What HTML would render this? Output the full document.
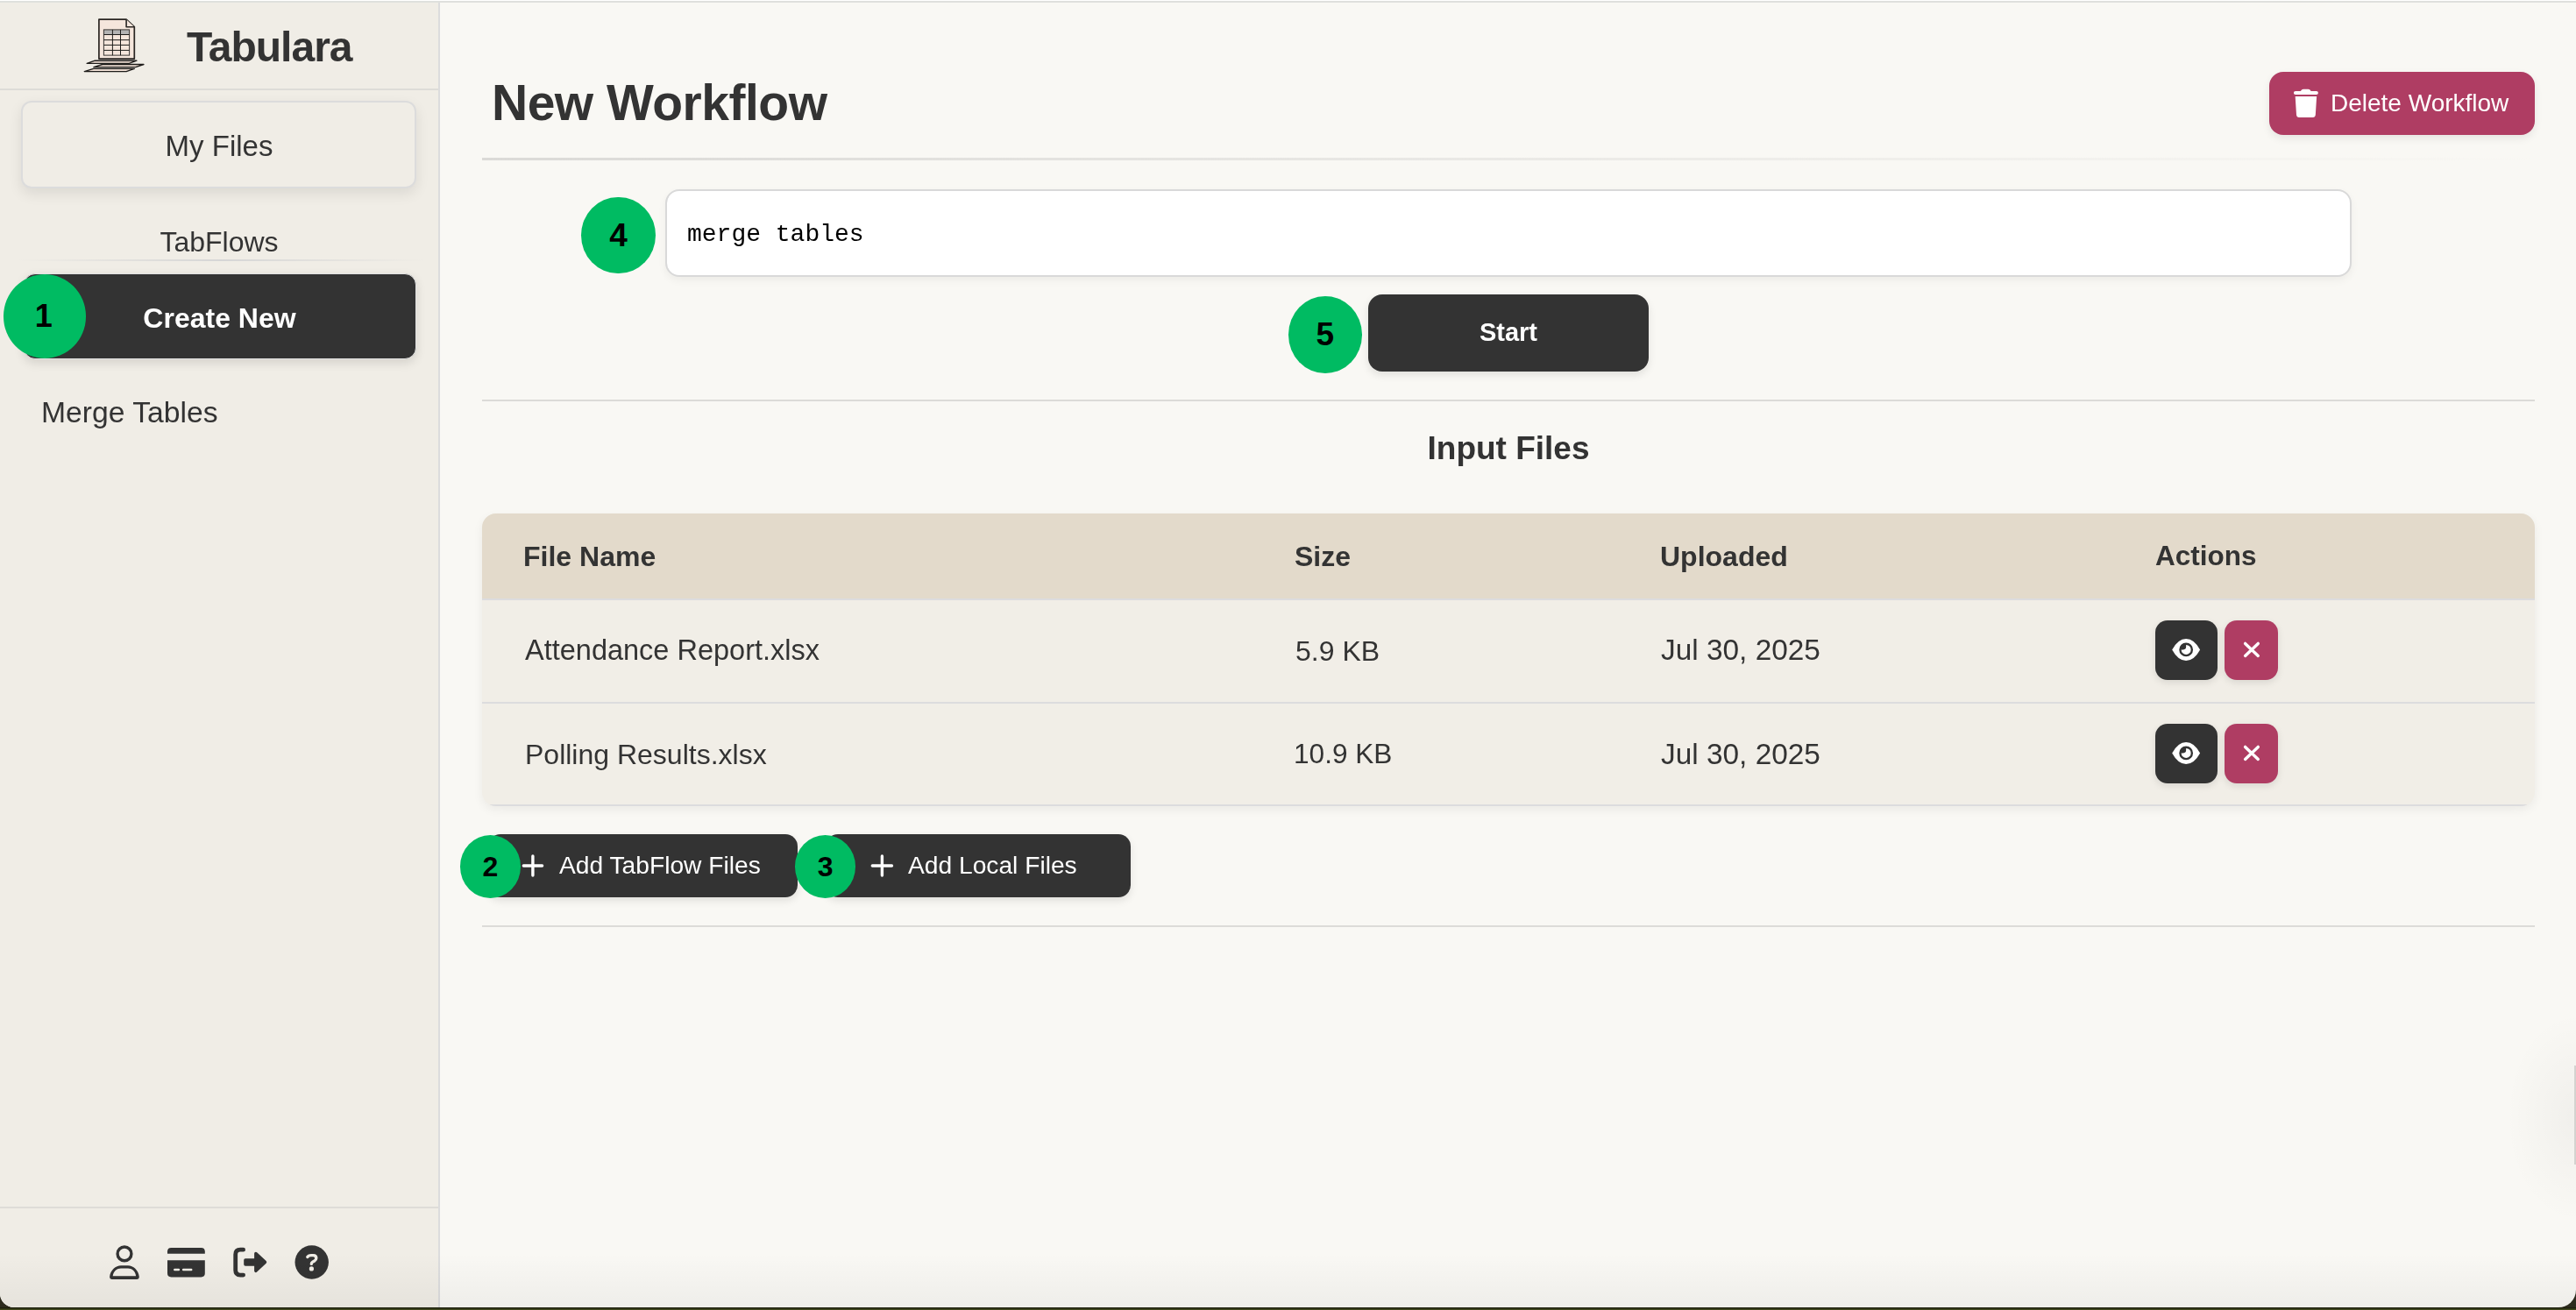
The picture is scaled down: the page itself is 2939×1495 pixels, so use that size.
<!DOCTYPE html>
<html>
<head>
<meta charset="utf-8">
<style>
*{box-sizing:border-box;margin:0;padding:0}
html,body{width:2939px;height:1495px;overflow:hidden;background:#2d2b1e}
body{position:relative;font-family:"Liberation Sans",sans-serif;color:#333}
.a{position:absolute}
.win{left:0;top:0;width:2939px;height:1492px;background:#f9f8f4;border-radius:0 0 20px 16px;overflow:hidden}
.t{position:absolute;white-space:nowrap;line-height:1;will-change:transform}
.side{left:0;top:3px;width:502px;height:1489px;background:#f0ede6;border-right:2px solid #dcdcdd}
.badge{position:absolute;border-radius:50%;background:#00bb62;color:#000;font-weight:bold;display:flex;align-items:center;justify-content:center;line-height:1}
.dark{background:#333}
.crim{background:#af3d63}
</style>
</head>
<body>
<div class="a win">
  <!-- top strip -->
  <div class="a" style="left:0;top:0;width:2939px;height:1px;background:#fff"></div>
  <div class="a" style="left:0;top:1px;width:2939px;height:2px;background:#dfe0dd"></div>

  <!-- SIDEBAR -->
  <div class="a side"></div>
  <div class="a" style="left:0;top:101px;width:500px;height:2px;background:#dddcd8"></div>
  <svg class="a" style="left:90px;top:15px" width="80" height="75" viewBox="90 15 80 75">
    <path d="M112.9 22.2 L144.1 22.2 L153.3 30.7 L153.3 67.1 L112.9 67.1 Z" fill="#f5e6dc" stroke="#2a2623" stroke-width="1.7" stroke-linejoin="round"/>
    <path d="M144.1 22.2 L144.1 30.7 L153.3 30.7" fill="#f5e6dc" stroke="#2a2623" stroke-width="1.6" stroke-linejoin="round"/>
    <rect x="118.4" y="33.9" width="29.2" height="5.5" fill="#b3b3b3"/>
    <rect x="118.4" y="33.9" width="29.2" height="29.2" fill="none" stroke="#3a3633" stroke-width="1"/>
    <path d="M118.4 39.5 H147.6 M118.4 45.6 H147.6 M118.4 51.4 H147.6 M118.4 57.4 H147.6 M128.4 33.9 V63.1 M137.5 33.9 V63.1" stroke="#1e1c1a" stroke-width="1"/>
    <path d="M108.3 69.2 L155.9 69.2 L147.3 72.4 L99.2 72.4 Z" fill="#ecdcd2" stroke="#1e1c1a" stroke-width="1.4" stroke-linejoin="round"/>
    <path d="M116.9 73.5 L163.9 73.5 L154.7 76.6 L106.9 76.6 Z" fill="#ecdcd2" stroke="#1e1c1a" stroke-width="1.4" stroke-linejoin="round"/>
    <path d="M106.6 78.4 L153.3 78.4 L144.1 81.6 L96.3 81.6 Z" fill="#ecdcd2" stroke="#1e1c1a" stroke-width="1.4" stroke-linejoin="round"/>
  </svg>
  <div class="t" style="left:213px;top:29.6px;font-size:48px;font-weight:bold;letter-spacing:-1px">Tabulara</div>

  <div class="a" style="left:24px;top:115px;width:451px;height:100px;border:2px solid #dcdcdc;border-radius:12px;background:#f0ede6;box-shadow:0 6px 16px rgba(0,0,0,0.09)"></div>
  <div class="t" style="left:25px;width:450px;text-align:center;top:149.6px;font-size:33px">My Files</div>

  <div class="t" style="left:0;width:500px;text-align:center;top:260.1px;font-size:32px">TabFlows</div>
  <div class="a" style="left:20px;top:296px;width:465px;height:2px;background:linear-gradient(to right,rgba(215,215,215,0),#d6d6d6 50%,rgba(215,215,215,0))"></div>

  <div class="a dark" style="left:26.5px;top:311.5px;width:448.5px;height:98.5px;border:1.5px solid #e2e2e2;border-radius:13px;box-shadow:0 4px 12px rgba(0,0,0,0.12)"></div>
  <div class="t" style="left:27px;width:447px;text-align:center;top:346.5px;font-size:32px;font-weight:bold;color:#fff">Create New</div>
  <div class="badge" style="left:3.8px;top:313px;width:94px;height:95.7px;font-size:36px;padding-right:2px">1</div>

  <div class="t" style="left:47px;top:454.3px;font-size:33.7px">Merge Tables</div>

  <div class="a" style="left:0;top:1377px;width:500px;height:2px;background:#dedcd8"></div>
  <svg class="a" style="left:100px;top:1400px" width="300" height="80" viewBox="100 1400 300 80">
    <!-- user -->
    <circle cx="142" cy="1430.9" r="7.9" fill="none" stroke="#333" stroke-width="3.4"/>
    <path fill="#333" fill-rule="evenodd" d="M125.1 1457 C126 1449.5 132 1444.3 138 1444.3 L146 1444.3 C152 1444.3 158 1449.5 158.8 1457 Q158.8 1460 156 1460 L128 1460 Q125.1 1460 125.1 1457 Z M128.7 1456.2 C129.5 1451 133.5 1447.6 138 1447.6 L146 1447.6 C150.5 1447.6 154.5 1451 155.1 1456.2 Z"/>
    <!-- card -->
    <path fill="#333" d="M191 1430.7 L191 1428.2 Q191 1423.9 195.3 1423.9 L229.5 1423.9 Q233.8 1423.9 233.8 1428.2 L233.8 1430.7 Z"/>
    <path fill="#333" d="M191 1438.2 L233.8 1438.2 L233.8 1453.1 Q233.8 1457.4 229.5 1457.4 L195.3 1457.4 Q191 1457.4 191 1453.1 Z"/>
    <path stroke="#f0ede6" stroke-width="2.5" stroke-linecap="round" d="M199.3 1449.1 H203.9 M209.1 1449.1 H218.2"/>
    <!-- sign out -->
    <path fill="none" stroke="#333" stroke-width="4.8" stroke-linecap="round" stroke-linejoin="round" d="M277.6 1426.2 L274.2 1426.2 Q268.7 1426.2 268.7 1431.7 L268.7 1449.6 Q268.7 1455.1 274.2 1455.1 L277.6 1455.1"/>
    <path fill="#333" stroke="#333" stroke-width="3.6" stroke-linejoin="round" d="M280 1438 L291.9 1438 L291.9 1430.5 L302.4 1440.4 L291.9 1450.3 L291.9 1443 L280 1443 Z"/>
    <!-- help -->
    <circle cx="355.7" cy="1440.5" r="19.2" fill="#333"/>
    <path fill="none" stroke="#f0ede6" stroke-width="3.4" stroke-linecap="round" stroke-linejoin="round" d="M350.8 1434.6 Q351.8 1432.6 355 1432.6 L357.4 1432.6 Q360.8 1432.6 360.8 1435.8 Q360.8 1437.8 358.8 1438.9 L357 1439.9 Q355.3 1440.9 355.3 1442.4"/>
    <circle cx="355.4" cy="1447.9" r="2.6" fill="#f0ede6"/>
  </svg>

  <!-- MAIN -->
  <div class="t" style="left:561px;top:88.7px;font-size:57px;font-weight:bold;letter-spacing:-0.5px">New Workflow</div>
  <div class="a" style="left:550px;top:180px;width:2342px;height:3px;background:linear-gradient(to right,#dbdad7,rgba(219,218,215,0))"></div>

  <div class="a crim" style="left:2589px;top:82px;width:303px;height:72px;border-radius:16px;box-shadow:0 4px 10px rgba(0,0,0,0.08)"></div>
  <svg class="a" style="left:2610px;top:96px" width="40" height="44" viewBox="2610 96 40 44">
    <path fill="#fff" d="M2624.8 103.9 L2626.3 102.3 Q2627 101.8 2628 101.8 L2633.5 101.8 Q2634.5 101.8 2635.2 102.3 L2636.7 103.9 L2642.8 103.9 Q2644.9 103.9 2644.9 106 Q2644.9 108.1 2642.8 108.1 L2619 108.1 Q2616.9 108.1 2616.9 106 Q2616.9 103.9 2619 103.9 Z"/>
    <path fill="#fff" d="M2618.7 109.9 L2643.1 109.9 L2641.8 131 Q2641.5 133.9 2638.6 133.9 L2623.2 133.9 Q2620.3 133.9 2620 131 Z"/>
  </svg>
  <div class="t" style="left:2659.4px;top:103.7px;font-size:28px;color:#fff">Delete Workflow</div>

  <div class="badge" style="left:663.4px;top:224.6px;width:84.2px;height:87.4px;font-size:37px">4</div>
  <div class="a" style="left:759px;top:216px;width:1924px;height:100px;border:2px solid #d9d9d9;border-radius:16px;background:#fff;box-shadow:0 4px 10px rgba(0,0,0,0.05)"></div>
  <div class="t" style="left:783.7px;top:253.9px;font-size:28px;font-family:'Liberation Mono',monospace;color:#000">merge tables</div>

  <div class="badge" style="left:1469.6px;top:337.9px;width:84.3px;height:87.8px;font-size:37px">5</div>
  <div class="a dark" style="left:1561px;top:336px;width:320px;height:88px;border-radius:16px;box-shadow:0 4px 10px rgba(0,0,0,0.1)"></div>
  <div class="t" style="left:1561px;width:320px;text-align:center;top:364.8px;font-size:29px;font-weight:bold;color:#fff">Start</div>

  <div class="a" style="left:550px;top:456px;width:2342px;height:2px;background:#dcdbd8"></div>
  <div class="t" style="left:550px;width:2342px;text-align:center;top:492.7px;font-size:37px;font-weight:bold">Input Files</div>

  <!-- table -->
  <div class="a" style="left:550px;top:586px;width:2342px;height:334px;border-radius:16px;overflow:hidden;box-shadow:0 4px 12px rgba(0,0,0,0.06);background:#f1eee7">
    <div class="a" style="left:0;top:0;width:2342px;height:97px;background:#e3dacb"></div>
    <div class="a" style="left:0;top:97px;width:2342px;height:2px;background:#dcdcde"></div>
    <div class="a" style="left:0;top:215px;width:2342px;height:2px;background:#dcdcde"></div>
    <div class="a" style="left:0;top:332px;width:2342px;height:2px;background:#dcdcde"></div>
  </div>
  <div class="t" style="left:597px;top:618.9px;font-size:32px;font-weight:bold">File Name</div>
  <div class="t" style="left:1477.4px;top:618.9px;font-size:32px;font-weight:bold">Size</div>
  <div class="t" style="left:1893.7px;top:618.9px;font-size:32px;font-weight:bold">Uploaded</div>
  <div class="t" style="left:2458.5px;top:619.3px;font-size:31.5px;font-weight:bold">Actions</div>

  <div class="t" style="left:599px;top:726.2px;font-size:32.5px">Attendance Report.xlsx</div>
  <div class="t" style="left:1477.5px;top:726.6px;font-size:32px">5.9 KB</div>
  <div class="t" style="left:1895.4px;top:725.4px;font-size:33.4px">Jul 30, 2025</div>
  <div class="t" style="left:598.5px;top:845px;font-size:32px">Polling Results.xlsx</div>
  <div class="t" style="left:1476px;top:845.45px;font-size:31.6px">10.9 KB</div>
  <div class="t" style="left:1895.4px;top:843.8px;font-size:33.4px">Jul 30, 2025</div>

  <!-- action buttons -->
  <div class="a dark" style="left:2459px;top:708px;width:71px;height:68px;border-radius:14px;box-shadow:0 3px 8px rgba(0,0,0,0.1)"></div>
  <div class="a crim" style="left:2538px;top:708px;width:61px;height:68px;border-radius:14px;box-shadow:0 3px 8px rgba(0,0,0,0.1)"></div>
  <div class="a dark" style="left:2459px;top:826px;width:71px;height:68px;border-radius:14px;box-shadow:0 3px 8px rgba(0,0,0,0.1)"></div>
  <div class="a crim" style="left:2538px;top:826px;width:61px;height:68px;border-radius:14px;box-shadow:0 3px 8px rgba(0,0,0,0.1)"></div>
  <svg class="a" style="left:2459px;top:708px" width="140" height="186" viewBox="2459 708 140 186">
    <g>
      <path fill="#fff" d="M2478.2 741.4 Q2485 728.9 2494.1 728.9 Q2503.3 728.9 2510.1 741.4 Q2503.3 753.9 2494.1 753.9 Q2485 753.9 2478.2 741.4 Z"/>
      <circle cx="2494.15" cy="741.4" r="6.7" fill="none" stroke="#333" stroke-width="2.35"/>
      <path fill="#333" d="M2487.95 741.4 A6.2 6.2 0 0 1 2494.15 735.2 L2494.15 738.1 Q2494.15 741.4 2490.85 741.4 Z"/>
    </g>
    <g transform="translate(0 118)">
      <path fill="#fff" d="M2478.2 741.4 Q2485 728.9 2494.1 728.9 Q2503.3 728.9 2510.1 741.4 Q2503.3 753.9 2494.1 753.9 Q2485 753.9 2478.2 741.4 Z"/>
      <circle cx="2494.15" cy="741.4" r="6.7" fill="none" stroke="#333" stroke-width="2.35"/>
      <path fill="#333" d="M2487.95 741.4 A6.2 6.2 0 0 1 2494.15 735.2 L2494.15 738.1 Q2494.15 741.4 2490.85 741.4 Z"/>
    </g>
    <path stroke="#fff" stroke-width="3.4" stroke-linecap="round" d="M2561.6 734.4 L2576.3 748.4 M2576.3 734.4 L2561.6 748.4"/>
    <path transform="translate(0 118)" stroke="#fff" stroke-width="3.4" stroke-linecap="round" d="M2561.6 734.4 L2576.3 748.4 M2576.3 734.4 L2561.6 748.4"/>
  </svg>

  <!-- add buttons -->
  <div class="a dark" style="left:557px;top:952px;width:353px;height:72px;border-radius:14px;box-shadow:0 4px 10px rgba(0,0,0,0.1)"></div>
  <div class="a dark" style="left:942px;top:952px;width:348px;height:72px;border-radius:14px;box-shadow:0 4px 10px rgba(0,0,0,0.1)"></div>
  <div class="badge" style="left:524.6px;top:952.9px;width:69.7px;height:72.1px;font-size:32px">2</div>
  <div class="badge" style="left:906.8px;top:952.9px;width:69.7px;height:72.1px;font-size:32px">3</div>
  <svg class="a" style="left:590px;top:970px" width="440" height="36" viewBox="590 970 440 36">
    <path stroke="#fff" stroke-width="3.4" stroke-linecap="round" d="M607.9 977 V999.1 M597.3 988 H618.6"/>
    <path stroke="#fff" stroke-width="3.4" stroke-linecap="round" d="M1006.4 977 V999.1 M995.3 988 H1017.5"/>
  </svg>
  <div class="t" style="left:637.5px;top:973.1px;font-size:28.2px;color:#fff">Add TabFlow Files</div>
  <div class="t" style="left:1036px;top:973.1px;font-size:28.2px;color:#fff">Add Local Files</div>

  <div class="a" style="left:550px;top:1056px;width:2342px;height:2px;background:#dcdbd8"></div>
  <div class="a" style="left:0;top:1430px;width:2939px;height:62px;background:linear-gradient(to bottom,rgba(0,0,0,0),rgba(0,0,0,0.045))"></div>
  <div class="a" style="left:2860px;top:1150px;width:79px;height:250px;background:radial-gradient(ellipse 80px 120px at 100% 50%,rgba(0,0,0,0.035),rgba(0,0,0,0))"></div>
  <div class="a" style="left:2937px;top:1216px;width:2px;height:113px;background:#d4d3d0"></div>
</div>
<div class="a" style="left:0;top:1492px;width:2939px;height:3px;background:linear-gradient(to bottom,#141408,#4a5424)"></div>
</body>
</html>
